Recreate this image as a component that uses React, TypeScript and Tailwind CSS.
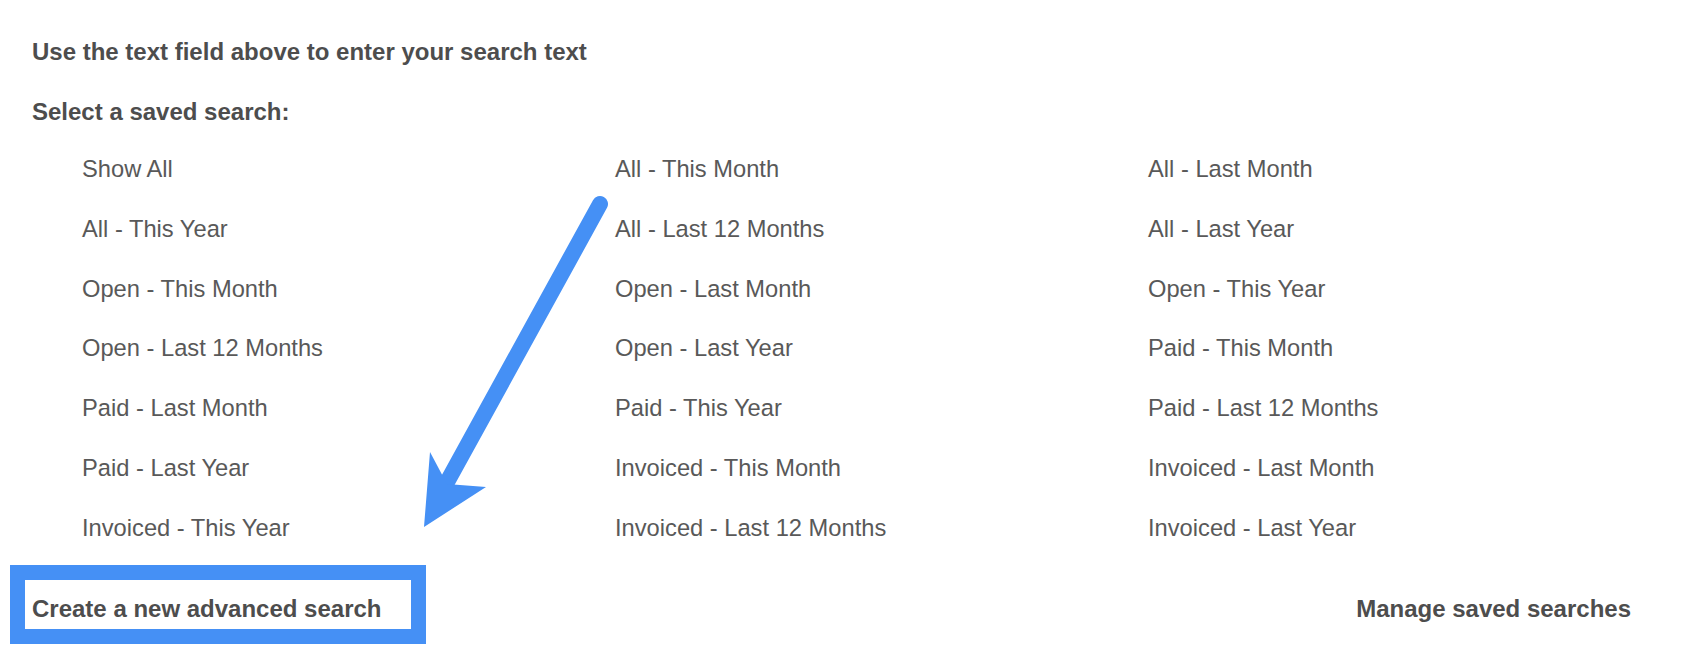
const searches = [
  "Show All", "All - This Month", "All - Last Month",
  "All - This Year", "All - Last 12 Months", "All - Last Year",
  "Open - This Month", "Open - Last Month", "Open - This Year",
  "Open - Last 12 Months", "Open - Last Year", "Paid - This Month",
  "Paid - Last Month", "Paid - This Year", "Paid - Last 12 Months",
  "Paid - Last Year", "Invoiced - This Month", "Invoiced - Last Month",
  "Invoiced - This Year", "Invoiced - Last 12 Months", "Invoiced - Last Year",
];

const Arrow = () => (
  <svg className="pointer-events-none absolute inset-0" width="1698" height="654" viewBox="0 0 1698 654">
    <line x1="600" y1="204" x2="446" y2="484" stroke="#4590f5" strokeWidth="16" strokeLinecap="round" />
    <polygon points="424,527 430,452 447,484 486,487" fill="#4590f5" />
  </svg>
);

const App = () => (
  <div className="relative min-h-[654px] bg-white font-['Liberation_Sans',Arial,sans-serif] text-[#4d4d4d]">
    <div className="pl-[32px] pr-[67px] pt-[22px]">
      <p className="text-[24px] font-bold leading-[60px]">Use the text field above to enter your search text</p>
      <p className="text-[24px] font-bold leading-[60px]">Select a saved search:</p>
      <ul className="-mt-[2px] grid grid-cols-[533px_533px_533px] pl-[50px]">
        {searches.map((s) => (
          <li key={s} className="text-[23.7px] leading-[59.8px] text-[#595959]">
            <a href="#">{s}</a>
          </li>
        ))}
      </ul>
      <div className="mt-[20px] flex justify-between text-[24px] font-bold leading-[60px]">
        <a href="#">Create a new advanced search</a>
        <a href="#">Manage saved searches</a>
      </div>
    </div>

    {/* annotation */}
    <div className="absolute left-[10px] top-[565px] h-[79px] w-[416px] border-[15px] border-[#4590f5]" />
    <Arrow />
  </div>
);

export default App;
